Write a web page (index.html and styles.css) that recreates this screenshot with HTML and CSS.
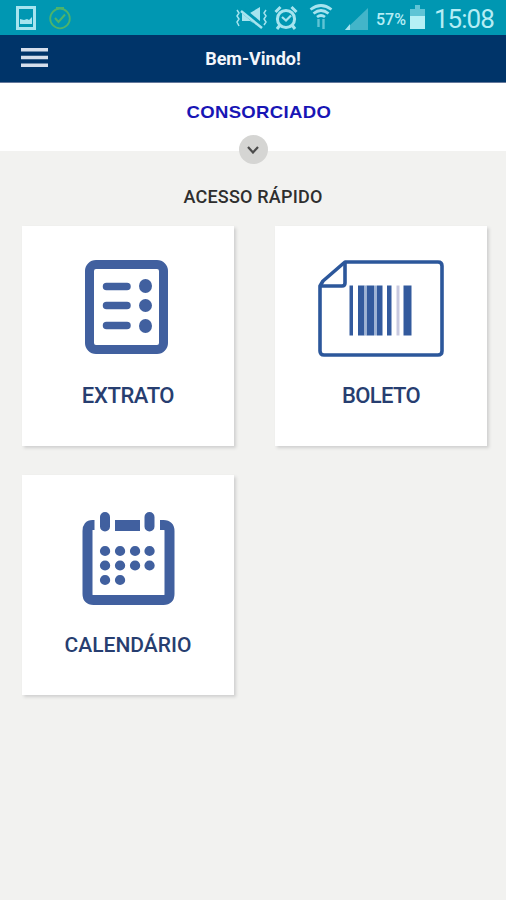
FILE: index.html
```html
<!DOCTYPE html>
<html lang="pt-BR">
<head>
<meta charset="utf-8">
<title>Bem-Vindo!</title>
<link rel="stylesheet" href="styles.css">
</head>
<body>
<div class="status">
  <svg class="picture-icon" width="20" height="24" viewBox="0 0 20 24"><rect x="1.5" y="1.5" width="17" height="21" fill="none" stroke="#a6e4ef" stroke-width="3"/><path d="M4 18v-5l4 1 3-1 2 1 3-3v7z" fill="#a6e4ef"/></svg>
  <svg class="check-icon" width="24" height="24" viewBox="0 0 24 24" fill="none" stroke="#4db36b"><circle cx="12" cy="12.500" r="9.800" stroke-width="1.800"/><path d="M8 2h8M7 12l3.500 4L17 8.500" stroke-width="2"/></svg>
  <div class="status-right">
    <svg class="mute-icon" width="34" height="24" viewBox="0 0 34 24"><path d="M7 7h8l10-6v20l-10-6H7z" fill="#a6e4ef"/><path d="M5 2l24 20" stroke="#0097b2" stroke-width="5.500"/><path d="M6 5l21 17" stroke="#a6e4ef" stroke-width="2.500"/><path d="M2 4l2 3-2 3 2 3-2 3 2 4M31 4l-2 3 2 3-2 3 2 3-2 3" fill="none" stroke="#a6e4ef" stroke-width="1.500"/></svg>
    <svg class="alarm-icon" width="24" height="26" viewBox="0 0 24 26" fill="none" stroke="#a6e4ef" stroke-width="3"><circle cx="12" cy="14" r="8.600"/><path d="M1.500 7l5-5M22.500 7l-5-5M6 20l-3 4M18 20l3 4"/><path d="M8 12l4 3.500 5-5" stroke-width="2.200"/></svg>
    <svg class="wifi-icon" width="24" height="27" viewBox="0 0 24 27" fill="none" stroke="#a6e4ef" stroke-width="2.700"><path d="M1.500 6.500Q12-1.500 22.500 6.500M4.500 10.500Q12 4.500 19.500 10.500M8 14q4-3 8 0"/><path d="M9.500 16v8M14.500 16v10" stroke="#5fc4d5" stroke-width="2.400"/></svg>
    <svg class="signal-icon" width="23" height="24" viewBox="0 0 23 24"><path d="M0 24L23 2v22z" fill="#43b5c9"/><path d="M0 24l5-6v6z" fill="#a6e4ef"/></svg>
    <span class="percent">57%</span>
    <svg class="battery-icon" width="15" height="24" viewBox="0 0 15 24"><path d="M5 0h5v4h5v8H0V4h5z" fill="#5fc4d5"/><path d="M0 11h15v13H0z" fill="#b5f0f5"/></svg>
    <span class="clock">15:08</span>
  </div>
</div>
<header class="header">
  <svg class="menu-icon" width="27" height="19" viewBox="0 0 27 19" fill="#d5deec"><path d="M0 0h27v3.600H0zM0 7.700h27v3.600H0zM0 15.400h27v3.600H0z"/></svg>
  <h1 class="title">Bem-Vindo!</h1>
</header>
<section class="member">
  <div class="member-name">CONSORCIADO</div>
  <button class="expand" aria-label="Expandir"><svg width="12" height="8" viewBox="0 0 12 8"><path d="M1 1l5 5.500L11 1" fill="none" stroke="#4b4b4b" stroke-width="2.200"/></svg></button>
</section>
<main>
  <h2 class="section-title">ACESSO RÁPIDO</h2>
  <div class="grid">
    <div class="card">
      <svg width="126" height="98" viewBox="0 0 126 98"><rect x="24.500" y="4.500" width="74" height="85" rx="6.500" fill="none" stroke="#41609f" stroke-width="9"/><g stroke="#41609f" stroke-width="7.500" stroke-linecap="round"><path d="M41.500 26.500H62M41.500 45.500H62M41.500 65.500H62"/></g><g fill="#41609f"><ellipse cx="80.500" cy="26" rx="6.500" ry="7"/><ellipse cx="80.500" cy="45.500" rx="6.500" ry="6.500"/><ellipse cx="80.500" cy="66" rx="6.500" ry="7"/></g></svg>
      <div class="label">EXTRATO</div>
    </div>
    <div class="card">
      <svg width="126" height="98" viewBox="0 0 126 98"><g fill="none" stroke="#2c579b" stroke-width="3.600" stroke-linejoin="round"><path d="M27 2h93q4 0 4 4v85q0 4-4 4H6q-4 0-4-4V26l3-5z"/><path d="M27 3v20q0 3-3 3H3"/></g><g fill="#335a9d"><path d="M31.500 25.500H35v50h-3.500zM40 25.500h6.500v50H40zM48.500 25.500H56v50h-7.500zM59 25.500h5.500v50H59zM69 25.500h4.500v50H69zM85.500 25.500h8v50h-8z"/><path d="M56 25.500h3v50h-3zM46.500 25.500h2v50h-2z" fill="#9eb3d5"/><path d="M78.500 25.500h3v50h-3z" fill="#c8c9df"/></g></svg>
      <div class="label boleto">BOLETO</div>
    </div>
    <div class="card">
      <svg width="126" height="98" viewBox="0 0 126 98"><path d="M30 16h-2q-5 0-5 6v63q0 6 6 6h70q6 0 6-6V22q0-6-6-6h-3.500" transform="translate(-.500 0)" fill="none" stroke="#41609f" stroke-width="10"/><path d="M50 11h25v11H50z" fill="#41609f"/><path d="M40 8v9.500M84.500 8v9.500" stroke="#41609f" stroke-width="10" stroke-linecap="round"/><g stroke="#41609f" stroke-width="10.200" stroke-linecap="round"><path d="M40 42h.1M55 42h.1M70 42h.1M84.500 42h.1M40 56.500h.1M55 56.500h.1M70 56.500h.1M84.500 56.500h.1M40 71h.1M55 71h.1"/></g></svg>
      <div class="label calendario">CALENDÁRIO</div>
    </div>
  </div>
</main>
</body>
</html>
```
FILE: styles.css
```css
* { box-sizing: border-box; }
body { margin: 0; min-height: 900px; background: #f2f2f0; font-family: Roboto, "Liberation Sans", sans-serif; }
svg { display: block; flex: none; }
.status { height: 35px; background: #0097b2; display: flex; align-items: flex-start; color: #b5edf5; }
.picture-icon { margin: 6px 0 0 16px; }
.check-icon { margin: 6px 0 0 12px; }
.status-right { margin-left: auto; display: flex; padding-right: 11px; }
.mute-icon { margin-top: 6px; }
.alarm-icon { margin: 5px 0 0 5px; }
.wifi-icon { margin: 3px 0 0 11px; }
.signal-icon { margin: 6px 0 0 12px; }
.percent { width: 31px; margin: 9px 0 0 8px; font-size: 16px; line-height: 22px; white-space: nowrap; font-weight: 500; }
.battery-icon { margin: 5px 0 0 3px; }
.clock { width: 61px; margin: 4px 0 0 9px; font-size: 26px; line-height: 31px; letter-spacing: -1px; white-space: nowrap; }
.header { height: 48px; background: #003469; border-bottom: 1px solid #65799c; display: flex; padding: 13px 21px 0; color: #f4f6fb; }
.title { flex: 1; margin: 0 27px 0 0; text-align: center; font-size: 18px; line-height: 22px; font-weight: 700; }
.member { height: 68px; background: #fff; display: flex; flex-direction: column; align-items: center; }
.member-name { margin-top: 20px; padding-left: 11px; font: 700 17px/20px "Liberation Sans", sans-serif; letter-spacing: .3px; color: #1815b5; transform: scaleX(1.09); }
.expand { width: 29px; height: 29px; flex: none; margin-top: 12px; padding: 0; border: 0; border-radius: 50%; background: #d5d5d3; display: grid; place-items: center; }
.section-title { margin: 35px 0 0; text-align: center; font-size: 18px; line-height: 22px; font-weight: 500; letter-spacing: .2px; color: #2e2e2e; }
.grid { display: grid; grid-template-columns: 212px 212px; column-gap: 41px; row-gap: 29px; padding: 18px 22px; }
.card { height: 220px; background: #fff; box-shadow: 2px 2px 3px #cfcfcf; display: flex; flex-direction: column; align-items: center; padding-top: 34px; }
.label { margin-top: 25px; font-size: 22px; line-height: 26px; font-weight: 500; letter-spacing: -.4px; color: #273e70; white-space: nowrap; }
.boleto { letter-spacing: -.6px; }
.calendario { font-size: 21px; letter-spacing: 0; }
```
